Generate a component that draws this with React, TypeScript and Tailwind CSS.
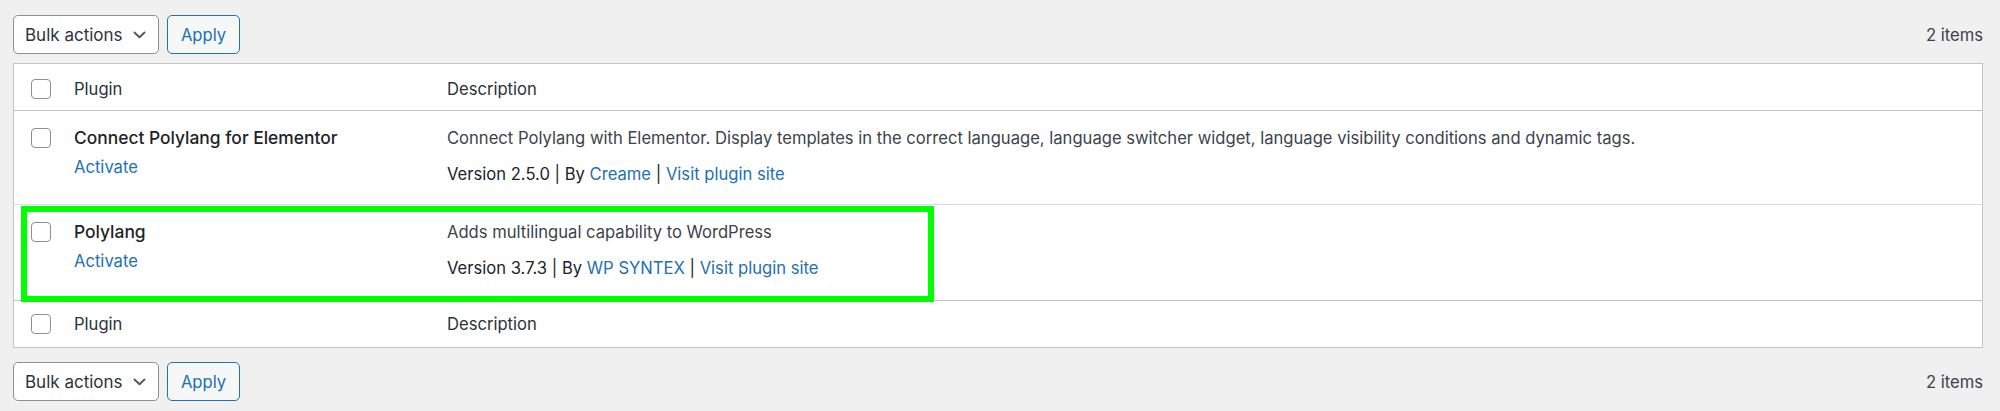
import React from "react";

function Checkbox() {
  return <span className="block w-[20px] h-[20px] rounded-[4px] border border-[#8c8f94] bg-white" />;
}

function Chevron() {
  return (
    <svg width="13" height="8" viewBox="0 0 13 8" fill="none" className="ml-[10px]">
      <path d="M1.5 1.5 L6.5 6.2 L11.5 1.5" stroke="#50575e" strokeWidth="1.9" strokeLinecap="round" strokeLinejoin="round" />
    </svg>
  );
}

function Toolbar() {
  return (
    <div className="flex items-center justify-between">
      <div className="flex items-center gap-[8px]">
        <div className="flex items-center h-[39px] w-[146px] pl-[11px] rounded-[5px] border border-[#8c8f94] bg-white text-[17px] text-[#2c3338]">
          <span>Bulk actions</span>
          <Chevron />
        </div>
        <button className="h-[39px] w-[73px] rounded-[5px] border border-[#2271b1] bg-[#f6f7f7] text-[#2271b1]">Apply</button>
      </div>
      <span className="text-[#3c434a]">2 items</span>
    </div>
  );
}

type Plugin = { name: string; desc: string; version: string; author: string };

const plugins: Plugin[] = [
  {
    name: "Connect Polylang for Elementor",
    desc: "Connect Polylang with Elementor. Display templates in the correct language, language switcher widget, language visibility conditions and dynamic tags.",
    version: "2.5.0",
    author: "Creame",
  },
  {
    name: "Polylang",
    desc: "Adds multilingual capability to WordPress",
    version: "3.7.3",
    author: "WP SYNTEX",
  },
];

function HeadRow({ top }: { top: boolean }) {
  return (
    <div className={`flex ${top ? "border-b pt-[13px] pb-[9px]" : "border-t pt-[11px] pb-[11px]"} border-[#c3c4c7] text-[#2c3338]`}>
      <div className="w-[50px] pl-[17px] flex items-center">
        <Checkbox />
      </div>
      <div className="w-[373px] pl-[10px]">Plugin</div>
      <div className="flex-1 pl-[10px]">Description</div>
    </div>
  );
}

function PluginRow({ p, last }: { p: Plugin; last: boolean }) {
  return (
    <div className={`flex pt-[15px] ${last ? "pb-[20px]" : "pb-[18px] border-b border-[#dcdcde]"}`}>
      <div className="w-[50px] pl-[17px] pt-[2px]">
        <Checkbox />
      </div>
      <div className="w-[373px] pl-[10px] flex flex-col gap-[5px]">
        <span className="font-medium text-[17.4px] text-[#1d2327]">{p.name}</span>
        <span className="text-[#2271b1]">Activate</span>
      </div>
      <div className="flex-1 pl-[10px] flex flex-col gap-[12px]">
        <span className="text-[#3c434a]">{p.desc}</span>
        <span className="text-[#1d2327]">
          Version {p.version} | By <span className="text-[#2271b1]">{p.author}</span> |{" "}
          <span className="text-[#2271b1]">Visit plugin site</span>
        </span>
      </div>
    </div>
  );
}

export default function App() {
  return (
    <div
      className="relative min-h-[411px] bg-[#f0f0f1] pl-[13px] pr-[17px] pt-[15px] pb-[11px] text-[16.6px] leading-[24px]"
      style={{ fontFamily: "Inter, 'Noto Sans', sans-serif" }}
    >
      <Toolbar />
      <div className="mt-[9px] border border-[#c3c4c7] bg-white">
        <HeadRow top={true} />
        {plugins.map((p, i) => (
          <PluginRow key={p.name} p={p} last={i === plugins.length - 1} />
        ))}
        <HeadRow top={false} />
      </div>
      <div className="mt-[14px]">
        <Toolbar />
      </div>
      <div className="absolute left-[21px] top-[206px] w-[913px] h-[96px] border-[6px] border-[#00ff00] pointer-events-none" />
    </div>
  );
}
